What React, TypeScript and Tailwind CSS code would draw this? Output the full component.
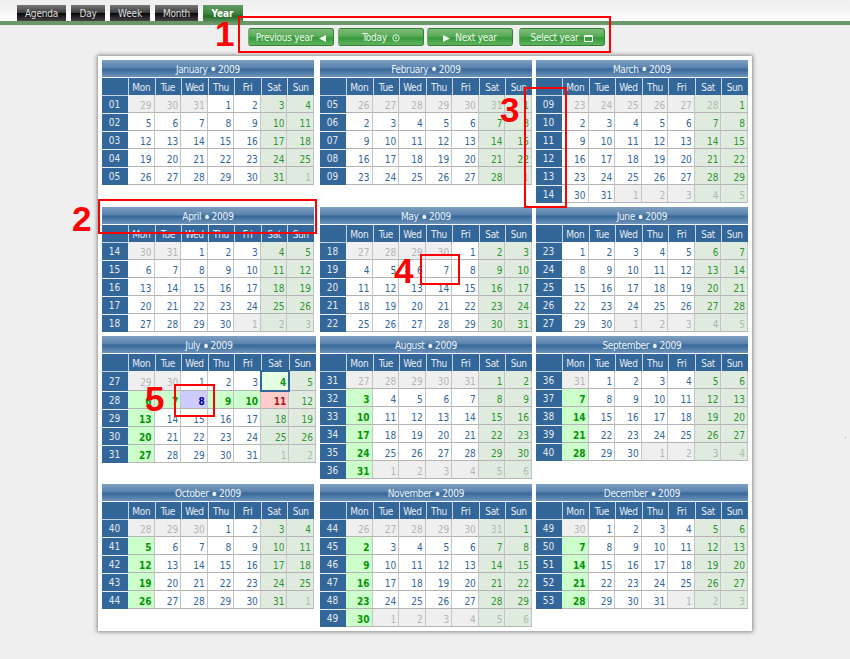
import React from 'react';

const YEAR = 2009;
const MONTHS = ['January', 'February', 'March', 'April', 'May', 'June', 'July', 'August', 'September', 'October', 'November', 'December'];
const DAYS = ['Mon', 'Tue', 'Wed', 'Thu', 'Fri', 'Sat', 'Sun'];
const DAY_MS = 86400000;

type Day = { month: number; date: number };

function weeksOf(month: number) {
  const first = Date.UTC(YEAR, month, 1);
  const last = Date.UTC(YEAR, month + 1, 0);
  const lead = (new Date(first).getUTCDay() + 6) % 7;
  const yearStart = Date.UTC(2008, 11, 29);
  const weeks: { no: string; days: Day[] }[] = [];
  for (let t = first - lead * DAY_MS; t <= last; t += 7 * DAY_MS) {
    const no = Math.round((t - yearStart) / (7 * DAY_MS)) + 1;
    const days = DAYS.map((_, i) => {
      const d = new Date(t + i * DAY_MS);
      return { month: d.getUTCMonth(), date: d.getUTCDate() };
    });
    weeks.push({ no: String(no).padStart(2, '0'), days });
  }
  return weeks;
}

function dayClass(month: number, day: Day, col: number) {
  const weekend = col > 4;
  if (day.month !== month) return weekend ? 'bg-[#e0ebe0] text-[#a9bda9]' : 'bg-[#efefef] text-[#b5b5b5]';
  if (month === 6 && day.date === 4) return 'bg-[#e5ffe5] text-[#119911] font-bold outline outline-2 -outline-offset-1 outline-[#336699] relative';
  if (month === 6 && day.date === 8) return 'bg-[#ccccff] text-[#000099] font-bold';
  if (month === 6 && day.date === 11) return 'bg-[#ffcccc] text-[#a51c1c] font-bold';
  const event = (month === 6 && day.date >= 6 && day.date <= 10) || (col === 0 && month > 6) || (col === 0 && month === 6 && day.date > 6);
  if (event) return 'bg-[#ccffcc] text-[#079307] font-bold';
  return weekend ? 'bg-[#e0ebe0] text-[#2f942f]' : 'bg-white text-[#336699]';
}

function MonthCalendar({ month }: { month: number }) {
  const july = month === 6;
  const cols = july
    ? 'grid-cols-[26px_26.6px_26.6px_26.6px_26.6px_26.6px_28.4px_26.6px]'
    : 'grid-cols-[26px_repeat(7,minmax(0,1fr))]';
  return (
    <section className={july ? 'w-[214px]' : 'w-[212px]'}>
      <h2 className={`mb-px flex h-[17px] items-center justify-center gap-[2px] bg-[linear-gradient(#7f9fc0_0%,#5681ad_48%,#336699_52%,#6f94b9_100%)] text-[#eef3f8] ${month > 2 ? 'pt-[2px]' : 'pt-px'}`}>
        <span>{MONTHS[month]}</span>
        <span className="text-[14px] leading-[10px] tracking-[-1px]">•</span>
        <span className="tracking-[-0.2px]">{YEAR}</span>
      </h2>
      <div className={`grid h-[17px] grid-rows-[17px] bg-[#336699] text-center leading-[19px] text-[#e3ebf3] ${cols}`}>
        <span />
        {DAYS.map((d) => (
          <span key={d} className="border-l border-[#c6d4e2] pr-px">{d}</span>
        ))}
      </div>
      {weeksOf(month).map((week, i) => {
        const tall = july && i === 0;
        return (
          <div key={week.no} className={`grid tracking-normal ${tall ? 'h-[20px] grid-rows-[20px]' : 'h-[18px] grid-rows-[18px]'} ${cols}`}>
            <span className={`bg-[#336699] pr-px text-center text-[#e3ebf3] ${i > 0 ? 'border-t border-[#e8eef4]' : 'border-t border-[#c6d4e2]'} ${tall ? 'leading-[20px]' : 'leading-[18px]'}`}>{week.no}</span>
            {week.days.map((day, c) => (
              <span
                key={c}
                className={`border-b border-r border-b-[#b4b4b4] border-r-[#c4c4c4] pr-[2px] text-right ${tall ? 'leading-[24px]' : 'leading-[22px]'} ${dayClass(month, day, c)}`}
              >
                {day.date}
              </span>
            ))}
          </div>
        );
      })}
    </section>
  );
}

const TABS = [
  { label: 'Agenda', width: 'w-[49px]' },
  { label: 'Day', width: 'w-[34px]' },
  { label: 'Week', width: 'w-[40px]' },
  { label: 'Month', width: 'w-[43px]' },
];

function ToolButton({ children, className }: { children: React.ReactNode; className: string }) {
  return (
    <button
      className={`flex h-[18px] items-center justify-center rounded-[3px] border border-[#338033] border-l-[#76ad76] bg-[linear-gradient(#7dbc7a_0%,#5aac57_45%,#36993a_55%,#62b35f_100%)] pt-[2px] text-[10px] leading-none tracking-[-0.25px] text-[#eef8ee] ${className}`}
    >
      {children}
    </button>
  );
}

const MARKERS = [
  { n: 1, box: 'left-[238px] top-[16px] w-[373px] h-[37px]', label: 'left-[215px] top-[16px]' },
  { n: 2, box: 'left-[98px] top-[199px] w-[219px] h-[35px]', label: 'left-[72px] top-[201px]' },
  { n: 3, box: 'left-[524px] top-[87px] w-[43px] h-[121px]', label: 'left-[500px] top-[92px]' },
  { n: 4, box: 'left-[420px] top-[254px] w-[40px] h-[31px]', label: 'left-[394px] top-[253px]' },
  { n: 5, box: 'left-[174px] top-[384px] w-[41px] h-[33px]', label: 'left-[145px] top-[381px]' },
];

export default function App() {
  return (
    <div className="relative h-[659px] w-[850px] overflow-hidden bg-[#efefef] font-['DejaVu_Sans_Condensed','DejaVu_Sans',sans-serif] text-[10px] tracking-[-0.35px] [font-stretch:condensed]">
      <nav className="mt-[5px] flex h-[20px] items-start border-b-4 border-[#699869] bg-[linear-gradient(#efefef,#ffffff)] pl-[17px]">
        <div className="flex gap-[5px]">
          {TABS.map((t) => (
            <a
              key={t.label}
              className={`h-[16px] bg-[linear-gradient(#777_0%,#3d3d3d_48%,#080808_52%,#444_100%)] text-center leading-[18px] tracking-[-0.2px] text-[#ddd] ${t.width}`}
            >
              {t.label}
            </a>
          ))}
          <a className="h-[20px] w-[40px] bg-[linear-gradient(#659b65_0%,#3f823f_45%,#216b21_55%,#699869_90%)] pr-px text-center font-bold leading-[18px] tracking-[-0.1px] text-white">Year</a>
        </div>
      </nav>

      <div className="flex h-[31px] pl-[248px] pt-[3px]">
        <ToolButton className="w-[86px] gap-[6px]">
          Previous year
          <svg width="7" height="7" viewBox="0 0 7 7" fill="currentColor"><path d="M7 0v7L0 3.5z" /></svg>
        </ToolButton>
        <ToolButton className="ml-[4px] w-[86px] gap-[5px]">
          Today
          <svg width="8" height="8" viewBox="0 0 8 8" fill="none" stroke="currentColor"><circle cx="4" cy="4" r="3.2" strokeWidth=".9" /><circle cx="4" cy="4" r=".6" /></svg>
        </ToolButton>
        <ToolButton className="ml-[3px] w-[86px] gap-[5px]">
          <svg width="7" height="7" viewBox="0 0 7 7" fill="currentColor"><path d="M0 0v7l7-3.5z" /></svg>
          Next year
        </ToolButton>
        <ToolButton className="ml-[6px] w-[86px] gap-[6px]">
          Select year
          <svg width="9" height="7" viewBox="0 0 9 7" fill="none" stroke="currentColor"><path d="M.5.5h8v6h-8zM0 1.5h9" /></svg>
        </ToolButton>
      </div>

      <main className="ml-[98px] grid h-[575px] w-[654px] grid-cols-[218px_216px_212px] grid-rows-[147px_129px_148px_147px] bg-white pl-[4px] pt-[4px] shadow-[0_0_4px_1px_#888]">
        {MONTHS.map((name, i) => (
          <MonthCalendar key={name} month={i} />
        ))}
      </main>

      {MARKERS.map((m) => (
        <React.Fragment key={m.n}>
          <div className={`absolute border-2 border-[#ff0000] ${m.box}`} />
          <span className={`absolute font-['Liberation_Sans',Arial,sans-serif] text-[35px] font-bold leading-[36px] tracking-normal text-[#ff0000] ${m.label}`}>{m.n}</span>
        </React.Fragment>
      ))}
      <div className="absolute left-[845px] top-[437px] size-px bg-[#999]" />
    </div>
  );
}
